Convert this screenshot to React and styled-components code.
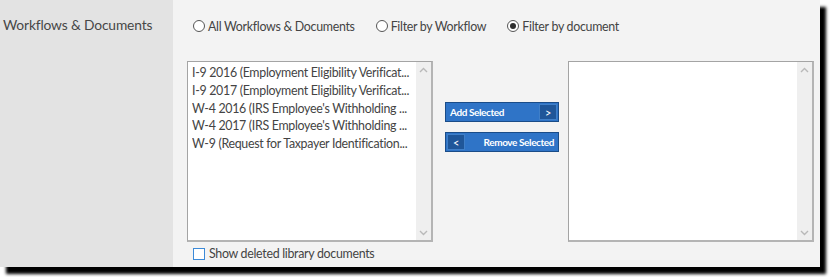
import React, { useState } from "react";
import styled, { createGlobalStyle } from "styled-components";

const GlobalStyle = createGlobalStyle`
  html, body {
    margin: 0;
    padding: 0;
    background: #ffffff;
    font-family: Lato, "Open Sans", "Liberation Sans", sans-serif;
  }
`;

const Page = styled.div`
  width: 830px;
  height: 277px;
  box-sizing: border-box;
  padding-bottom: 10px;
  overflow: hidden;
`;

const Frame = styled.div`
  width: 820px;
  height: 267px;
  display: grid;
  grid-template-columns: 173px 1fr;
  box-shadow: 6px 7px 3px #000;
`;

const LabelCell = styled.div`
  background: #e3e3e3;
  padding: 16px 0 0 3px;
  font-size: 13.8px;
  color: #474747;
  letter-spacing: -0.15px;
`;

const ContentCell = styled.div`
  background: #f3f3f3;
  padding: 17px 0 0 14px;
  display: flex;
  flex-direction: column;
`;

const RadioRow = styled.div`
  display: flex;
  align-items: center;
  margin-left: 6px;
  height: 18px;
`;

const RadioOption = styled.label`
  display: flex;
  align-items: center;
  gap: 3px;
  font-size: 12.4px;
  color: #444;
  margin-right: ${({ $gap }) => $gap}px;
  cursor: pointer;
  letter-spacing: -0.3px;
`;

const RadioCircle = styled.span`
  width: 10px;
  height: 10px;
  border-radius: 50%;
  border: 1.5px solid #555;
  background: #fff;
  display: flex;
  align-items: center;
  justify-content: center;

  &::after {
    content: "";
    width: 6px;
    height: 6px;
    border-radius: 50%;
    background: #2e2e2e;
    display: ${({ $checked }) => ($checked ? "block" : "none")};
  }
`;

const ListsRow = styled.div`
  display: flex;
  margin-top: 26px;
`;

const ListBox = styled.div`
  width: 246px;
  height: 181px;
  box-sizing: border-box;
  background: #fff;
  border: 1px solid #a4a4a4;
  border-right: 2px solid #b4b4b4;
  border-bottom: 2px solid #b4b4b4;
  display: flex;
`;

const Items = styled.ul`
  flex: 1;
  min-width: 0;
  list-style: none;
  margin: 0;
  padding: 2px 0 0 4px;
`;

const Item = styled.li`
  font-size: 12.4px;
  line-height: 17.75px;
  color: #444;
  white-space: nowrap;
  overflow: hidden;
  letter-spacing: -0.3px;
`;

const Scrollbar = styled.div`
  width: 15px;
  background: #efefef;
  display: flex;
  flex-direction: column;
  justify-content: space-between;
  align-items: center;
  padding: 5px 0 4px;
`;

const Buttons = styled.div`
  width: 114px;
  margin: 41px 9px 0 12px;
  display: flex;
  flex-direction: column;
  gap: 10px;
`;

const MoveButton = styled.button`
  width: 114px;
  height: 20px;
  box-sizing: border-box;
  background: #2f74c7;
  border: 1px solid #1a4c88;
  color: #fff;
  font-family: Lato, "Liberation Sans", sans-serif;
  font-weight: 700;
  font-size: 10px;
  letter-spacing: -0.4px;
  display: flex;
  flex-direction: ${({ $reverse }) => ($reverse ? "row-reverse" : "row")};
  align-items: center;
  justify-content: space-between;
  padding: ${({ $reverse }) => ($reverse ? "0 4px 0 1px" : "0 1px 0 4px")};
  cursor: pointer;
`;

const ArrowBox = styled.span`
  width: 18px;
  height: 16px;
  box-sizing: border-box;
  background: #1f5699;
  border: 1px solid #3f7fc8;
  display: flex;
  align-items: center;
  justify-content: center;
  font-size: 11px;
  font-weight: 400;
`;

const CheckRow = styled.label`
  display: flex;
  align-items: center;
  gap: 4px;
  margin: 4px 0 0 6px;
  font-size: 12.4px;
  color: #444;
  letter-spacing: -0.3px;
  cursor: pointer;
`;

const CheckBox = styled.span`
  width: 12px;
  height: 12px;
  box-sizing: border-box;
  border: 1.5px solid #3c8ad8;
  background: #fff;
`;

const Chevron = ({ up }) => (
  <svg width="9" height="6" viewBox="0 0 9 6">
    <path
      d={up ? "M1 5 L4.5 1.5 L8 5" : "M1 1 L4.5 4.5 L8 1"}
      fill="none"
      stroke="#b9b9b9"
      strokeWidth="1.4"
    />
  </svg>
);

const docs = [
  "I-9 2016 (Employment Eligibility Verificat...",
  "I-9 2017 (Employment Eligibility Verificat...",
  "W-4 2016 (IRS Employee's Withholding ...",
  "W-4 2017 (IRS Employee's Withholding ...",
  "W-9 (Request for Taxpayer Identification...",
];

const filters = [
  { label: "All Workflows & Documents", gap: 21 },
  { label: "Filter by Workflow", gap: 21 },
  { label: "Filter by document", gap: 0 },
];

function List({ items }) {
  return (
    <ListBox>
      <Items>
        {items.map((d) => (
          <Item key={d}>{d}</Item>
        ))}
      </Items>
      <Scrollbar>
        <Chevron up />
        <Chevron />
      </Scrollbar>
    </ListBox>
  );
}

export default function App() {
  const [filter, setFilter] = useState(2);

  return (
    <Page>
      <GlobalStyle />
      <Frame>
        <LabelCell>Workflows &amp; Documents</LabelCell>
        <ContentCell>
          <RadioRow>
            {filters.map((f, i) => (
              <RadioOption key={f.label} $gap={f.gap} onClick={() => setFilter(i)}>
                <RadioCircle $checked={filter === i} />
                {f.label}
              </RadioOption>
            ))}
          </RadioRow>
          <ListsRow>
            <List items={docs} />
            <Buttons>
              <MoveButton>
                Add Selected
                <ArrowBox>&gt;</ArrowBox>
              </MoveButton>
              <MoveButton $reverse>
                Remove Selected
                <ArrowBox>&lt;</ArrowBox>
              </MoveButton>
            </Buttons>
            <List items={[]} />
          </ListsRow>
          <CheckRow>
            <CheckBox />
            Show deleted library documents
          </CheckRow>
        </ContentCell>
      </Frame>
    </Page>
  );
}
